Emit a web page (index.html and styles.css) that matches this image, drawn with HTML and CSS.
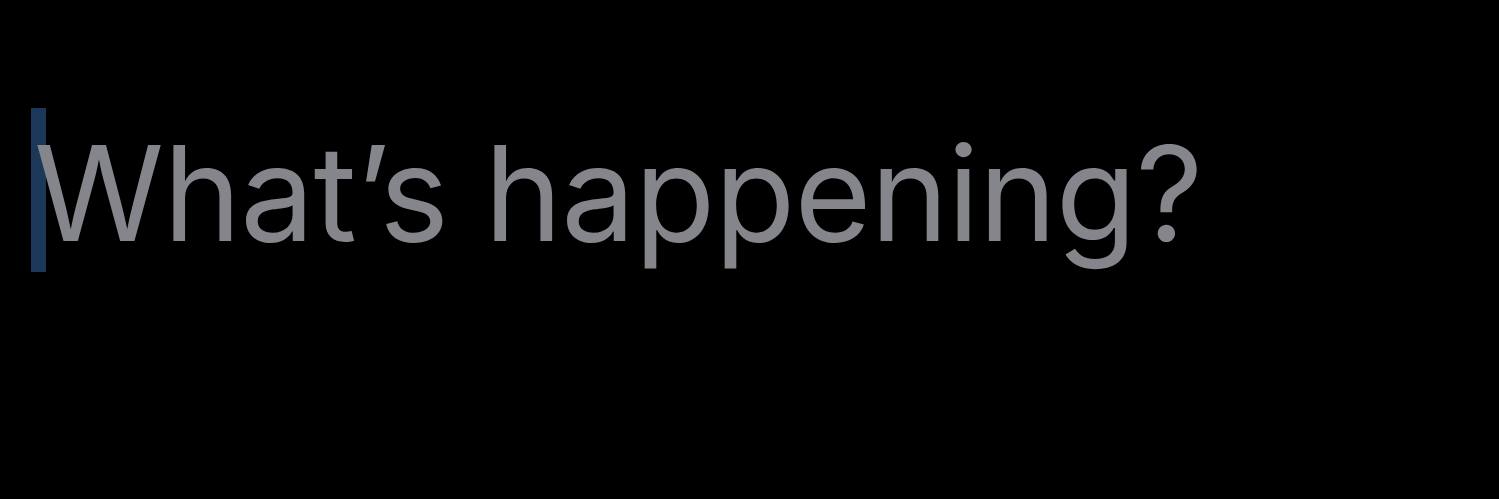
FILE: index.html
```html
<!DOCTYPE html>
<html>
<head>
<meta charset="utf-8">
<link rel="stylesheet" href="styles.css">
</head>
<body>
<div class="composer">
  <div class="field">
    <span class="caret"></span>
    <span class="placeholder">What’s happening?</span>
  </div>
</div>
</body>
</html>
```
FILE: styles.css
```css
html, body {
  margin: 0;
  padding: 0;
  background: #000;
  width: 1499px;
  height: 499px;
  overflow: hidden;
}
.composer {
  padding: 108px 0 0 34px;
}
.field {
  position: relative;
  height: 164px;
  display: flex;
  align-items: flex-start;
}
.caret {
  position: absolute;
  left: -3px;
  top: 0;
  width: 15px;
  height: 164px;
  background: #1c3858;
}
.placeholder {
  position: relative;
  margin-top: 3px;
  font-family: Inter, "Noto Sans", sans-serif;
  font-size: 132px;
  line-height: 164px;
  color: #85858c;
  letter-spacing: -0.9px;
  white-space: nowrap;
}
```
